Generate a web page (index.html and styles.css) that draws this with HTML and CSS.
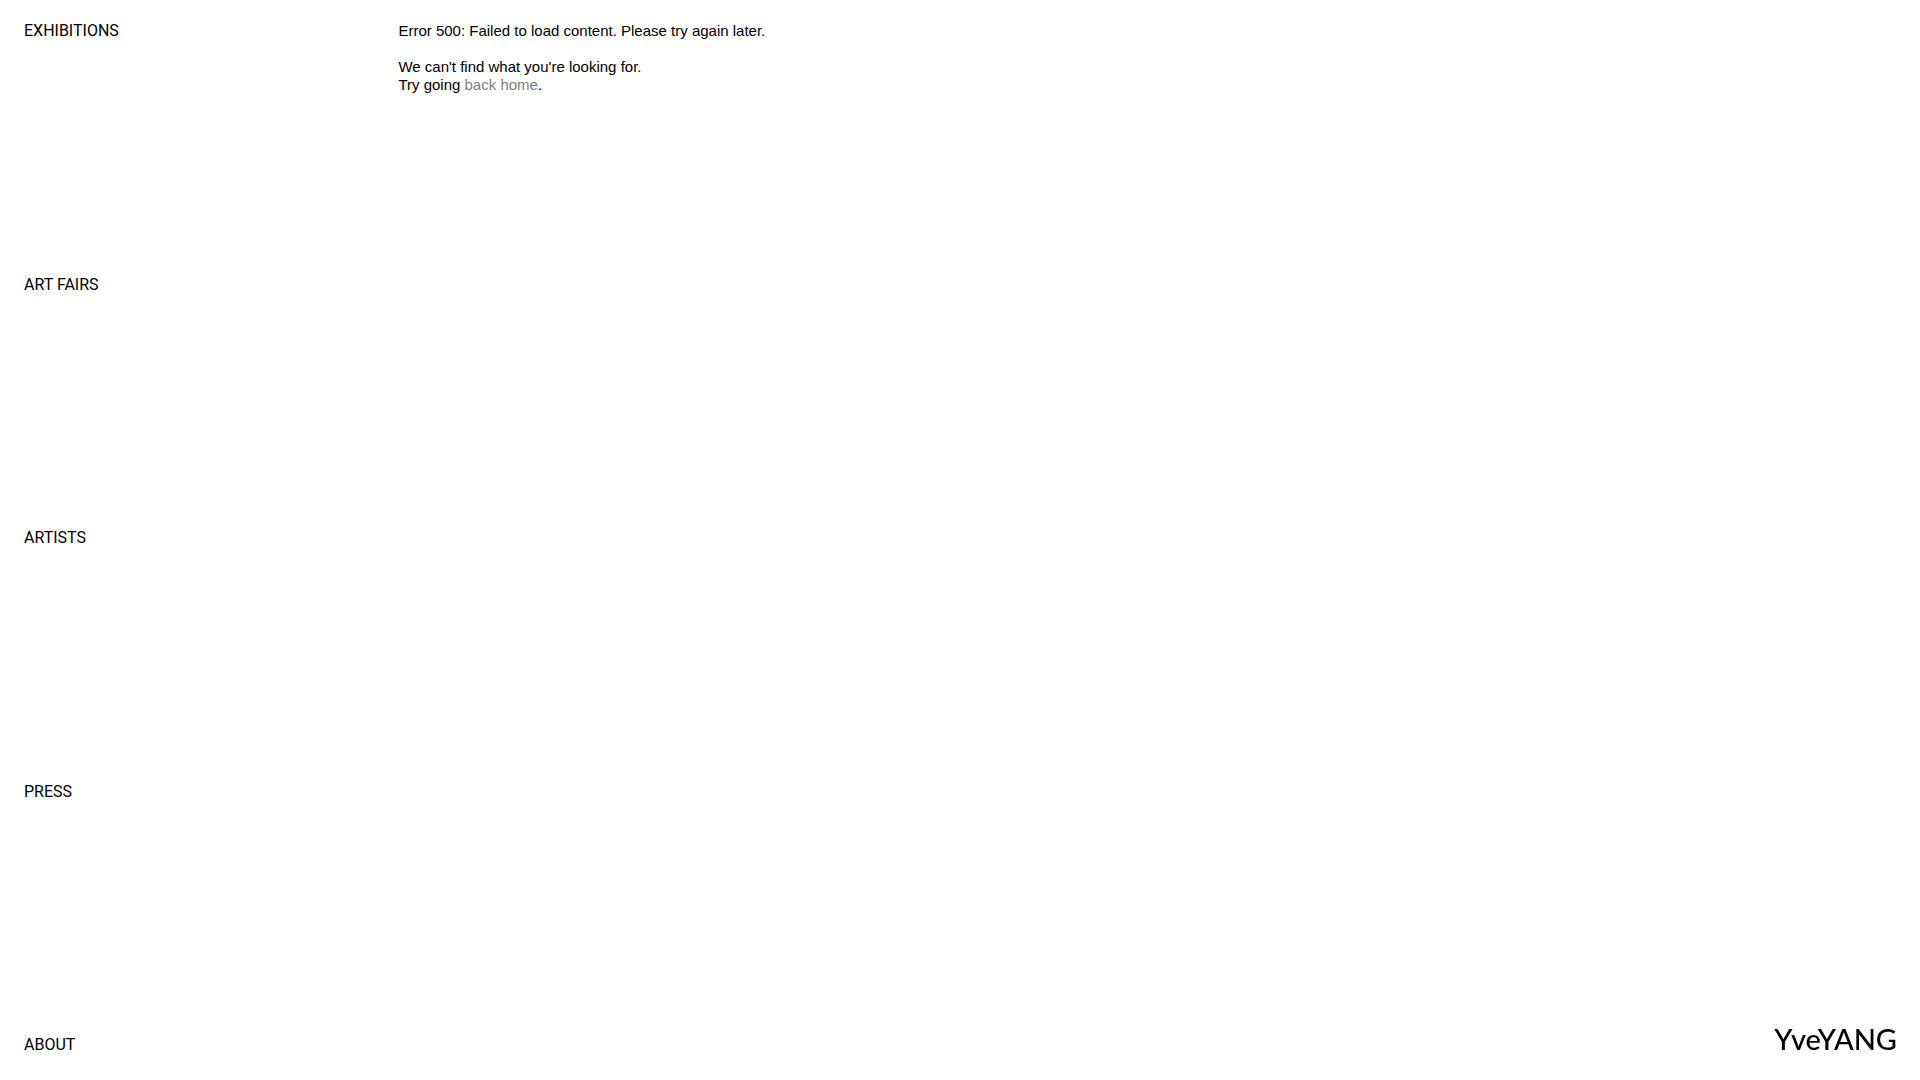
FILE: index.html
```html
<!DOCTYPE html>
<html lang="en">
<head>
  <meta charset="utf-8">
  <meta name="viewport" content="width=device-width, initial-scale=1">
  <title>YveYANG</title>
  <link rel="stylesheet" href="styles.css">
</head>
<body>
  <nav class="menu">
    <a href="/exhibitions">EXHIBITIONS</a>
    <a href="/art-fairs">ART FAIRS</a>
    <a href="/artists">ARTISTS</a>
    <a href="/press">PRESS</a>
    <a href="/about">ABOUT</a>
  </nav>
  <main class="content">
    <p>Error 500: Failed to load content. Please try again later.</p>
    <p>We can't find what you're looking for.<br>
      Try going <a class="home-link" href="/">back home</a>.</p>
  </main>
  <a class="logo" href="/">YveYANG</a>
</body>
</html>
```

FILE: styles.css
```css
* {
  box-sizing: border-box;
}

body {
  display: grid;
  grid-template-columns: 1fr 4fr;
  min-height: 100vh;
  margin: 0;
  padding: 22px 24px 26px;
  background: #fff;
  color: #000;
  font-family: "Liberation Sans", Arial, sans-serif;
  font-size: 15px;
  line-height: 18px;
}

a {
  color: inherit;
  text-decoration: none;
}

.menu {
  display: flex;
  flex-direction: column;
  align-items: flex-start;
  justify-content: space-between;
  font-family: Roboto, "Liberation Sans", sans-serif;
  font-size: 16px;
}

.content p {
  margin: 0 0 18px;
}

.home-link {
  color: #808080;
}

.logo {
  position: fixed;
  right: 23px;
  bottom: 26px;
  font-family: Lato, "Liberation Sans", sans-serif;
  font-size: 29px;
  font-weight: 500;
  line-height: 30px;
}
```
